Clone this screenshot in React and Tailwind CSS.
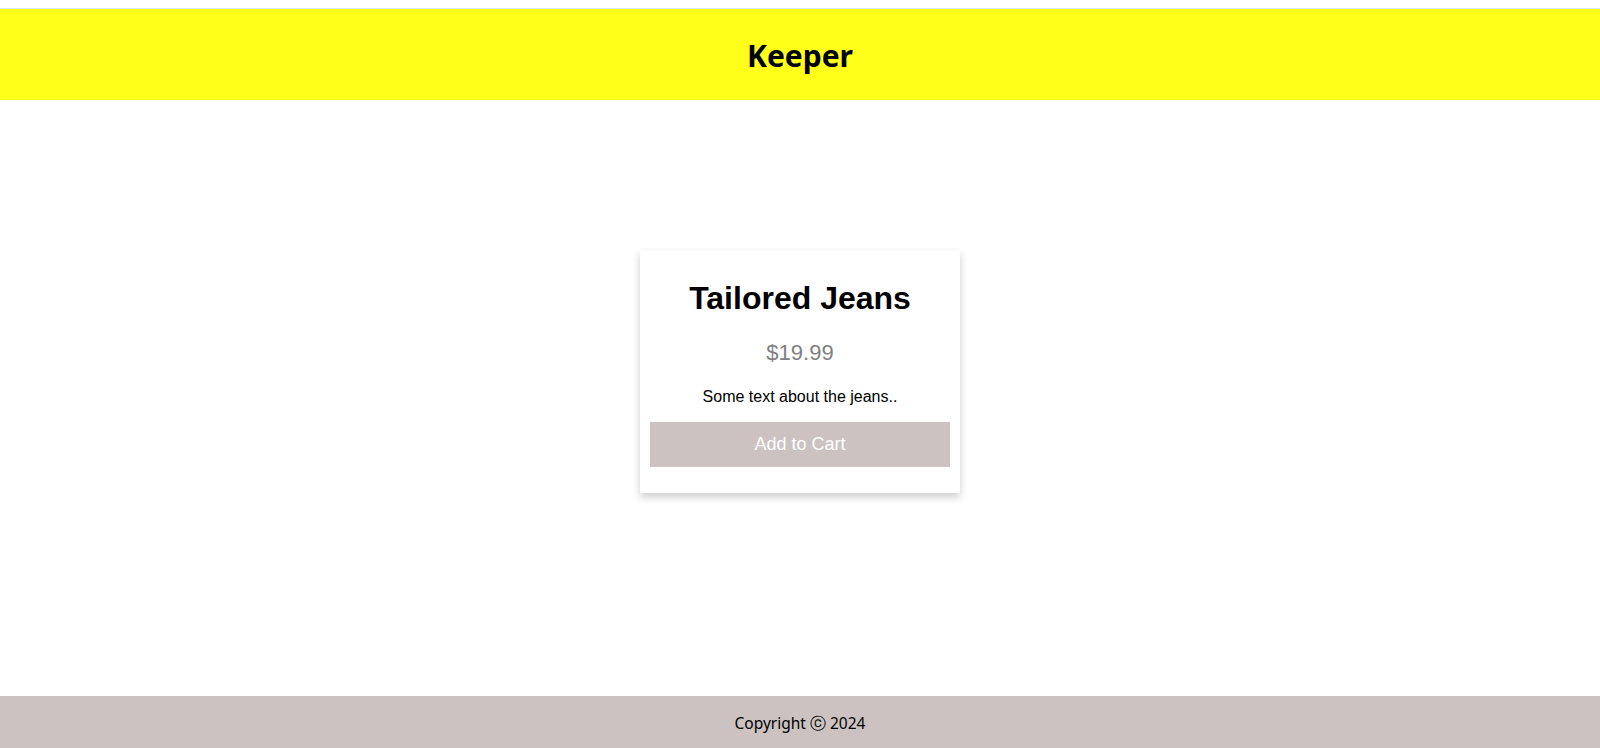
import React from 'react';

function Header() {
  return (
    <header className="mt-2 flex h-[92px] items-center justify-center border-t border-[#dde1ea] bg-[#ffff1a] pt-[3px]">
      <h1 className="text-[30px] font-bold leading-none text-black" style={{ fontFamily: '"Noto Sans", "Open Sans", sans-serif' }}>
        Keeper
      </h1>
    </header>
  );
}

function ProductCard({ title, price, text }) {
  return (
    <div className="mx-auto w-[320px] bg-white px-[10px] pt-[30px] pb-[26px] text-center shadow-[0_4px_8px_0_rgba(0,0,0,0.2)]" style={{ fontFamily: '"Liberation Sans", Arial, sans-serif' }}>
      <h2 className="text-[32px] font-bold leading-[37px] text-black">{title}</h2>
      <p className="mt-[23px] text-[22px] leading-[25px] text-[#808080]">{price}</p>
      <p className="mt-[23px] text-[16px] leading-[18px] text-black">{text}</p>
      <button className="mt-[16px] h-[45px] w-full bg-[#ccc2c2] text-[18px] text-white">
        Add to Cart
      </button>
    </div>
  );
}

function Footer() {
  return (
    <footer className="flex h-[52px] items-center justify-center bg-[#ccc2c2] pt-[3px]">
      <p className="text-[15.5px] text-black" style={{ fontFamily: '"Noto Sans", "Open Sans", sans-serif' }}>
        Copyright ⓒ 2024
      </p>
    </footer>
  );
}

export default function App() {
  return (
    <div className="flex h-[748px] flex-col bg-white">
      <Header />
      <main className="flex-1 pt-[150px]">
        <ProductCard title="Tailored Jeans" price="$19.99" text="Some text about the jeans.." />
      </main>
      <Footer />
    </div>
  );
}
